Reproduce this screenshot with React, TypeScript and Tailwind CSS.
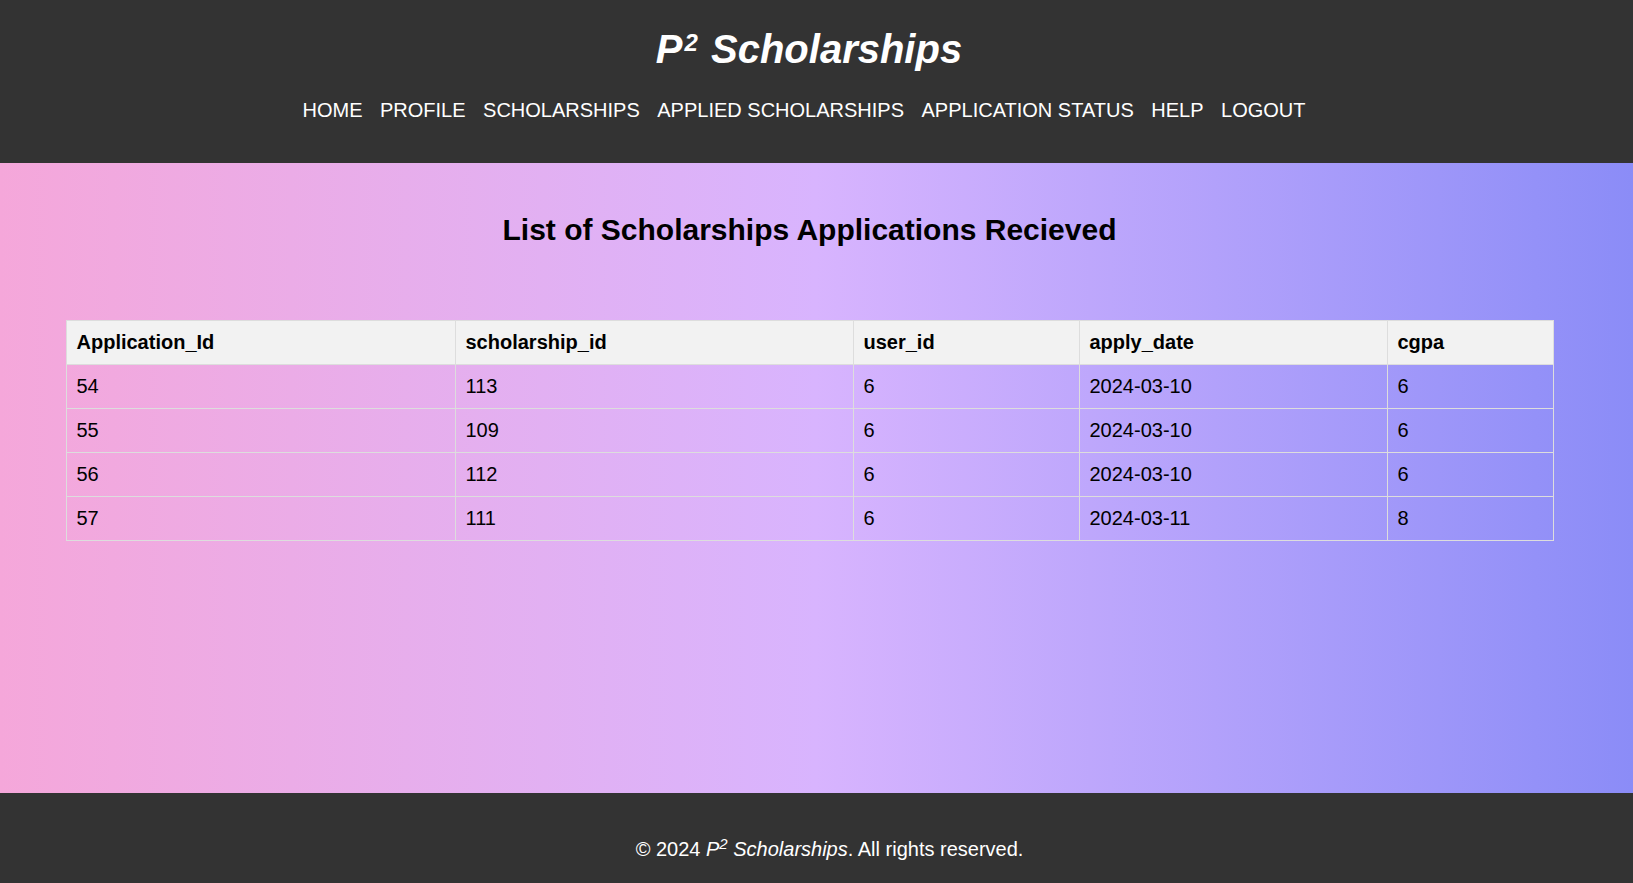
import React from "react";

const rows = [
  ["54", "113", "6", "2024-03-10", "6"],
  ["55", "109", "6", "2024-03-10", "6"],
  ["56", "112", "6", "2024-03-10", "6"],
  ["57", "111", "6", "2024-03-11", "8"],
];

const nav = ["HOME", "PROFILE", "SCHOLARSHIPS", "APPLIED SCHOLARSHIPS", "APPLICATION STATUS", "HELP", "LOGOUT"];

export default function App() {
  return (
    <div className="w-full min-h-[883px] flex flex-col" style={{ fontFamily: '"Liberation Sans", Arial, sans-serif' }}>
      <header className="h-[163px] bg-[#333333] text-white pr-[15px] flex flex-col items-center">
        <h1 className="mt-[26px] text-[40px] leading-[46px] font-bold italic">
          P<sup className="text-[24px] ml-[2px] mr-[2px]">2</sup>&nbsp;Scholarships
        </h1>
        <nav className="mt-[27px] pr-[10px] flex gap-[17.5px] text-[20px] leading-[23px]">
          {nav.map((n) => (
            <a key={n} href="#" className="text-white no-underline">
              {n}
            </a>
          ))}
        </nav>
      </header>
      <main className="h-[630px] bg-gradient-to-r from-[#f5a7da] via-[#d8b4fe] to-[#8b8cf7]">
        <div className="w-[1619px] flex flex-col items-center">
          <h2 className="mt-[50px] text-[30px] leading-[34px] font-bold text-black">
            List of Scholarships Applications Recieved
          </h2>
          <table className="mt-[73px] w-[1487px] table-fixed border-collapse text-[20px] leading-[23px] text-black">
            <colgroup>
              <col className="w-[389px]" />
              <col className="w-[398px]" />
              <col className="w-[226px]" />
              <col className="w-[308px]" />
              <col className="w-[166px]" />
            </colgroup>
            <thead>
              <tr className="bg-[#f2f2f2]">
                {["Application_Id", "scholarship_id", "user_id", "apply_date", "cgpa"].map((h) => (
                  <th key={h} className="border border-[#dddddd] p-[10px] text-left font-bold">
                    {h}
                  </th>
                ))}
              </tr>
            </thead>
            <tbody>
              {rows.map((r) => (
                <tr key={r[0]}>
                  {r.map((c, i) => (
                    <td key={i} className="border border-[#dddddd] p-[10px] text-left">
                      {c}
                    </td>
                  ))}
                </tr>
              ))}
            </tbody>
          </table>
        </div>
      </main>
      <footer className="h-[90px] bg-[#333333] text-white pl-[26px] flex justify-center">
        <p className="pt-[45px] text-[20px] leading-[23px]">
          © 2024 <i>P<sup>2</sup> Scholarships</i>. All rights reserved.
        </p>
      </footer>
    </div>
  );
}
